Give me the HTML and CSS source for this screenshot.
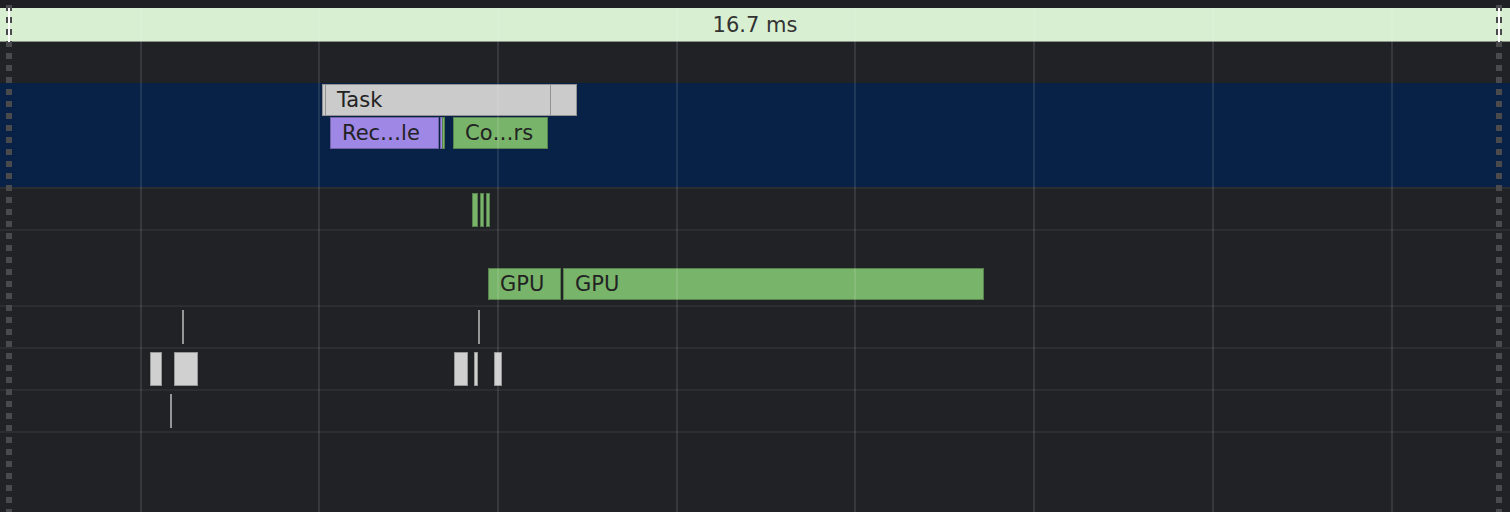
FILE: index.html
```html
<!DOCTYPE html>
<html lang="en">
<head>
    <meta charset="UTF-8">
    <title>Performance - flame chart</title>
    <link rel="stylesheet" href="styles.css">
</head>
<body>
    <div class="chart">
        <div class="top-gap"></div>
        <div class="frame-row">
            <div class="frame">16.7 ms</div>
        </div>

        <div class="track track-empty"></div>

        <!-- Main thread -->
        <div class="track track-main">
            <div class="bar bar-task bar-sliver" style="left: 322px; width: 4px; top: 1px;"></div>
            <div class="bar bar-task" style="left: 325px; width: 226px; top: 1px;">Task</div>
            <div class="bar bar-task bar-sliver" style="left: 550px; width: 27px; top: 1px;"></div>
            <div class="bar bar-purple" style="left: 330px; width: 109px; top: 34px;">Rec…le</div>
            <div class="bar bar-purple bar-sliver" style="left: 440px; width: 3px; top: 34px;"></div>
            <div class="bar bar-green bar-sliver" style="left: 442px; width: 3px; top: 34px;"></div>
            <div class="bar bar-green" style="left: 453px; width: 95px; top: 34px;">Co…rs</div>
        </div>

        <div class="track track-small">
            <div class="bar bar-green bar-tall" style="left: 472px; width: 6px; top: 4px;"></div>
            <div class="bar bar-green bar-tall" style="left: 480px; width: 4px; top: 4px;"></div>
            <div class="bar bar-green bar-tall" style="left: 486px; width: 4px; top: 4px;"></div>
        </div>

        <!-- GPU -->
        <div class="track track-gpu">
            <div class="bar bar-green" style="left: 488px; width: 73px; top: 37px;">GPU</div>
            <div class="bar bar-green" style="left: 563px; width: 421px; top: 37px;">GPU</div>
        </div>

        <div class="track track-small">
            <div class="bar bar-grey bar-tall" style="left: 182px; width: 2px; top: 3px;"></div>
            <div class="bar bar-grey bar-tall" style="left: 478px; width: 2px; top: 3px;"></div>
        </div>
        <div class="track track-small">
            <div class="bar bar-grey bar-tall" style="left: 150px; width: 12px; top: 3px;"></div>
            <div class="bar bar-grey bar-tall" style="left: 174px; width: 24px; top: 3px;"></div>
            <div class="bar bar-grey bar-tall" style="left: 454px; width: 14px; top: 3px;"></div>
            <div class="bar bar-grey bar-tall" style="left: 474px; width: 4px; top: 3px;"></div>
            <div class="bar bar-grey bar-tall" style="left: 494px; width: 8px; top: 3px;"></div>
        </div>
        <div class="track track-small">
            <div class="bar bar-grey bar-tall" style="left: 170px; width: 2px; top: 3px;"></div>
        </div>
        <div class="track track-rest"></div>

        <!-- Grid lignes verticales -->
        <div class="grid">
            <span class="grid-line" style="left: 140px;"></span>
            <span class="grid-line" style="left: 318px;"></span>
            <span class="grid-line" style="left: 497px;"></span>
            <span class="grid-line" style="left: 676px;"></span>
            <span class="grid-line" style="left: 854px;"></span>
            <span class="grid-line" style="left: 1033px;"></span>
            <span class="grid-line" style="left: 1212px;"></span>
            <span class="grid-line" style="left: 1391px;"></span>
        </div>

        <!-- Marqueurs de frame -->
        <div class="marker marker-left"></div>
        <div class="marker marker-right"></div>
    </div>
</body>
</html>
```

FILE: styles.css
```css
body {
    margin: 0;
    padding: 0;
    background-color: #212225;
    font-family: "DejaVu Sans", Verdana, sans-serif;
    overflow: hidden;
}
.chart {
    position: relative;
    width: 1510px;
    height: 512px;
    background-color: #212225;
    display: flex;
    flex-direction: column;
}
.top-gap {
    height: 8px;
    background-color: #1f2023;
}
.frame-row {
    height: 34px;
}
.frame {
    height: 33px;
    background-color: #d8efd2;
    border-bottom: 1px solid #8a9488;
    color: #333;
    font-size: 21px;
    line-height: 34px;
    text-align: center;
}
.track {
    position: relative;
    flex: none;
    border-bottom: 2px solid #2c2d30;
}
.track-empty {
    height: 41px;
    border-bottom: none;
}
.track-main {
    height: 104px;
    background-color: #072246;
}
.track-small {
    height: 40px;
}
.track-gpu {
    height: 74px;
}
.track-rest {
    flex: 1;
    border-bottom: none;
}
.bar {
    position: absolute;
    height: 32px;
    box-sizing: border-box;
    padding-left: 12px;
    overflow: hidden;
    white-space: nowrap;
    color: #222;
    font-size: 21px;
    line-height: 32px;
    box-shadow: inset 0 0 0 1px rgba(0, 0, 0, 0.28);
}
.bar-sliver {
    padding: 0;
}
.bar-tall {
    height: 34px;
    padding: 0;
}
.bar-task {
    background-color: #cbcbcb;
}
.bar-purple {
    background-color: #9f87e5;
}
.bar-green {
    background-color: #79b46b;
}
.bar-grey {
    background-color: #d0d0d0;
}
.grid {
    position: absolute;
    left: 0;
    top: 8px;
    width: 100%;
    bottom: 0;
    pointer-events: none;
}
.grid-line {
    position: absolute;
    top: 0;
    bottom: 0;
    width: 2px;
    background-color: rgba(255, 255, 255, 0.1);
}
.marker {
    position: absolute;
    top: 5px;
    bottom: 0;
    width: 6px;
    background: repeating-linear-gradient(to bottom, #4a4a4c 0 6px, transparent 6px 12px);
}
.marker::after {
    content: "";
    position: absolute;
    left: 2px;
    top: 3px;
    width: 2px;
    height: 34px;
    background-color: #ffffff;
}
.marker-left {
    left: 6px;
}
.marker-right {
    left: 1496px;
}
```
